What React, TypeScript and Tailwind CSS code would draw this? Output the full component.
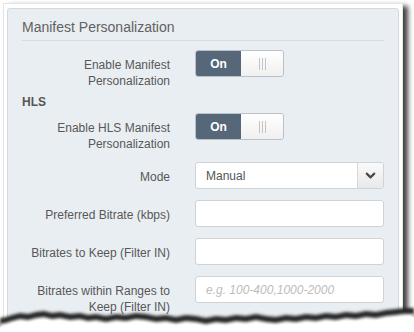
import { ChevronDown } from "lucide-react"

// tear line along the bottom of the snippet
const TEAR: [number, number][] = [
  [0, 318], [6, 317], [12, 315], [20, 313], [28, 314], [36, 312], [44, 311], [52, 313],
  [60, 312], [70, 314], [80, 313], [88, 315], [96, 314], [106, 316], [116, 314], [126, 315],
  [136, 313], [146, 314], [156, 316], [166, 315], [176, 317], [186, 315], [196, 316], [206, 318],
  [216, 316], [226, 317], [236, 315], [246, 316], [256, 314], [266, 316], [276, 317], [286, 315],
  [296, 316], [306, 314], [316, 315], [326, 313], [336, 314], [346, 312], [356, 313], [366, 311],
  [376, 312], [386, 310], [396, 309], [404, 308], [414, 308],
]

function tearPath(dy: number) {
  const pts = TEAR.map(([x, y]) => `${x},${y + dy}`).join(" L")
  return `M${pts} L414,340 L0,340 Z`
}

function TornEdge() {
  return (
    <svg className="pointer-events-none absolute left-0 top-0" width="414" height="332" aria-hidden>
      <defs>
        <filter id="soft" x="-5%" y="-50%" width="110%" height="200%">
          <feGaussianBlur stdDeviation="1.6" />
        </filter>
      </defs>
      <path d={tearPath(0)} fill="#262626" filter="url(#soft)" />
      <path d={tearPath(6)} fill="#ffffff" filter="url(#soft)" />
      <path d={tearPath(9)} fill="#ffffff" />
    </svg>
  )
}

function Toggle() {
  return (
    <div className="flex h-[27px] w-[89px] overflow-hidden rounded-[3px] border border-[#b9c0c7]">
      <div className="flex w-[45px] items-center justify-center bg-[#56677a] text-[12px] font-bold text-white">
        On
      </div>
      <div className="flex flex-1 items-center justify-center gap-[2px] bg-gradient-to-b from-white to-[#f0f0f0]">
        <span className="h-[12px] w-px bg-[#c4c4c4]" />
        <span className="h-[12px] w-px bg-[#c4c4c4]" />
        <span className="h-[12px] w-px bg-[#c4c4c4]" />
      </div>
    </div>
  )
}

function Row({ label, children }: { label: React.ReactNode; children: React.ReactNode }) {
  return (
    <div className="flex gap-[25px]">
      <div className="w-[148px] shrink-0 pt-[7px] text-right text-[12px] leading-[16px] text-[#585858]">
        {label}
      </div>
      <div className="flex-1">{children}</div>
    </div>
  )
}

function TextInput({ placeholder }: { placeholder?: string }) {
  return (
    <div className="flex h-[27px] items-center rounded-[3px] border border-[#cfd3d6] bg-white px-[10px] text-[12px] italic text-[#bdbdbd]">
      {placeholder}
    </div>
  )
}

export default function App() {
  return (
    <div className="relative h-[332px] w-[414px] overflow-hidden bg-white font-['Liberation_Sans',Arial,sans-serif]">
      <div className="ml-[3px] mt-[3px] w-[400px] border border-[#e4e4e4] bg-white px-[3px] pt-[4px] shadow-[5px_3px_5px_rgba(0,0,0,0.75)]">
        <div className="h-[340px] rounded-[3px] border border-[#d3d9de] bg-[#e9eef2] px-[14px] pt-[8px]">
          <div className="border-b border-[#d5dbe0] pb-[3px] text-[14px] leading-[20px] text-[#616161]">
            Manifest Personalization
          </div>

          <div className="mt-[9px]">
            <Row label={<>Enable Manifest<br />Personalization</>}>
              <Toggle />
            </Row>
          </div>

          <div className="mt-[5px] text-[12px] font-bold leading-[16px] text-[#555]">HLS</div>

          <div className="mt-[3px]">
            <Row label={<>Enable HLS Manifest<br />Personalization</>}>
              <Toggle />
            </Row>
          </div>

          <div className="mt-[10px] flex flex-col gap-[11px]">
            <Row label="Mode">
              <div className="flex h-[27px] overflow-hidden rounded-[3px] border border-[#cfd3d6] bg-white">
                <div className="flex flex-1 items-center px-[10px] text-[12px] text-[#555]">Manual</div>
                <div className="flex w-[26px] items-center justify-center border-l border-[#d6d6d6] bg-gradient-to-b from-[#fafafa] to-[#e9e9e9]">
                  <ChevronDown size={15} strokeWidth={3.4} className="text-[#4a4a4a]" />
                </div>
              </div>
            </Row>
            <Row label="Preferred Bitrate (kbps)">
              <TextInput />
            </Row>
            <Row label="Bitrates to Keep (Filter IN)">
              <TextInput />
            </Row>
            <Row label={<>Bitrates within Ranges to<br />Keep (Filter IN)</>}>
              <TextInput placeholder="e.g. 100-400,1000-2000" />
            </Row>
          </div>
        </div>
      </div>
      <TornEdge />
    </div>
  )
}
